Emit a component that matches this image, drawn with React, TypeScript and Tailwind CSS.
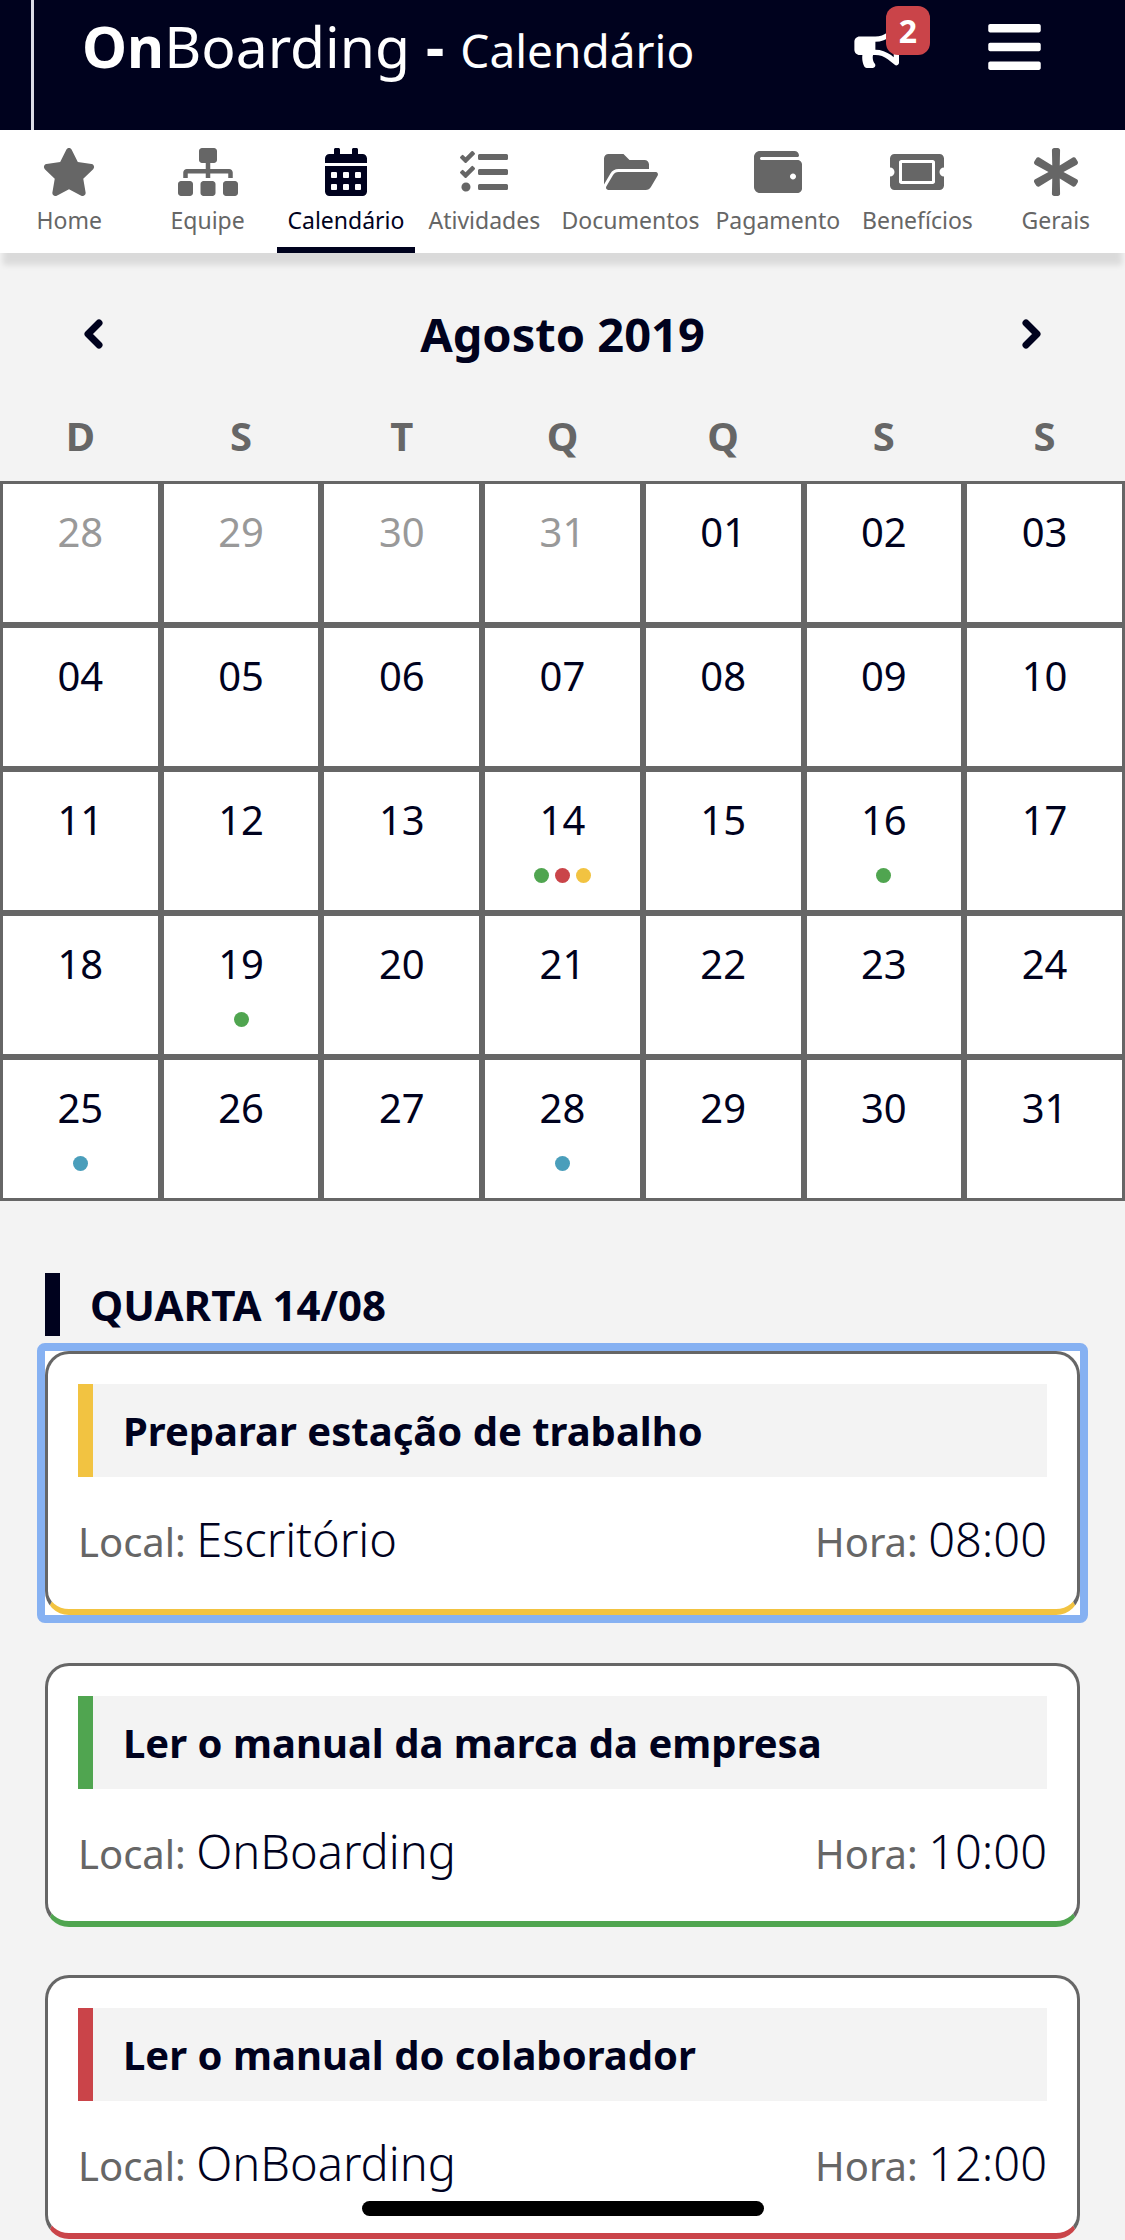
import type { IconType } from "react-icons";
import {
  FaAsterisk,
  FaBars,
  FaBullhorn,
  FaCalendarAlt,
  FaFolderOpen,
  FaSitemap,
  FaStar,
  FaTasks,
  FaTicketAlt,
  FaWallet,
} from "react-icons/fa";

type Tone = "green" | "red" | "yellow" | "blue";

const toneBackground: Record<Tone, string> = {
  green: "bg-[#50a550]",
  red: "bg-[#ca4449]",
  yellow: "bg-[#f2c341]",
  blue: "bg-[#4a9ebb]",
};

const toneBorderLeft: Record<Tone, string> = {
  green: "border-l-[#50a550]",
  red: "border-l-[#ca4449]",
  yellow: "border-l-[#f2c341]",
  blue: "border-l-[#4a9ebb]",
};

const toneBorderBottom: Record<Tone, string> = {
  green: "border-b-[#50a550]",
  red: "border-b-[#ca4449]",
  yellow: "border-b-[#f2c341]",
  blue: "border-b-[#4a9ebb]",
};

const tabs: { label: string; icon: IconType; active?: boolean }[] = [
  { label: "Home", icon: FaStar },
  { label: "Equipe", icon: FaSitemap },
  { label: "Calendário", icon: FaCalendarAlt, active: true },
  { label: "Atividades", icon: FaTasks },
  { label: "Documentos", icon: FaFolderOpen },
  { label: "Pagamento", icon: FaWallet },
  { label: "Benefícios", icon: FaTicketAlt },
  { label: "Gerais", icon: FaAsterisk },
];

const weekdays = ["D", "S", "T", "Q", "Q", "S", "S"];

const weeks = [
  ["28", "29", "30", "31", "01", "02", "03"],
  ["04", "05", "06", "07", "08", "09", "10"],
  ["11", "12", "13", "14", "15", "16", "17"],
  ["18", "19", "20", "21", "22", "23", "24"],
  ["25", "26", "27", "28", "29", "30", "31"],
];

const marks: Record<string, Tone[]> = {
  "2-3": ["green", "red", "yellow"],
  "2-5": ["green"],
  "3-1": ["green"],
  "4-0": ["blue"],
  "4-3": ["blue"],
};

type Task = { title: string; place: string; time: string; tone: Tone; focused?: boolean };

const tasks: Task[] = [
  { title: "Preparar estação de trabalho", place: "Escritório", time: "08:00", tone: "yellow", focused: true },
  { title: "Ler o manual da marca da empresa", place: "OnBoarding", time: "10:00", tone: "green" },
  { title: "Ler o manual do colaborador", place: "OnBoarding", time: "12:00", tone: "red" },
];

function Chevron({ d }: { d: string }) {
  return (
    <svg viewBox="0 0 20 30" className="h-[30px] w-5" fill="none" stroke="currentColor" aria-hidden="true">
      <path d={d} strokeWidth="7" strokeLinecap="round" strokeLinejoin="round" />
    </svg>
  );
}

function Header() {
  return (
    <header className="flex h-[130px] bg-[#00021e] pl-[31px] text-white">
      <div className="flex flex-1 items-start justify-between border-l-[3px] border-[#dcdce6] pl-12 pr-[84px]">
        <h1 className="flex items-baseline gap-4 whitespace-pre text-[57px] leading-[92px]">
          <span>
            <b className="font-bold">On</b>Boarding
          </span>
          <b className="font-bold">-</b>
          <span className="text-[46px]">Calendário</span>
        </h1>
        <div className="flex h-[94px] items-center gap-[86px]">
          <button type="button" aria-label="Avisos" className="relative">
            <FaBullhorn className="h-[42px] w-12" />
            <span className="absolute -top-5 left-8 flex h-[49px] w-11 items-center justify-center rounded-xl bg-[#ca4449] text-[32px] font-bold">
              2
            </span>
          </button>
          <button type="button" aria-label="Menu">
            <FaBars className="h-[60px] w-[53px]" />
          </button>
        </div>
      </div>
    </header>
  );
}

function Tabs() {
  return (
    <nav className="relative flex h-[123px] bg-white shadow-[0_15px_6px_-3px_rgba(0,0,0,0.1)]">
      {tabs.map(({ label, icon: Icon, active }) => (
        <a
          key={label}
          href="#"
          aria-current={active ? "page" : undefined}
          className={
            active
              ? "flex flex-1 flex-col items-center gap-2 border-b-[6px] border-[#00021e] px-2 pt-[18px] text-[#00021e]"
              : "flex flex-1 flex-col items-center gap-2 px-2 pt-[18px] text-[#666666]"
          }
        >
          <Icon className="h-12 w-[60px]" />
          <span className="text-[23px] leading-8">{label}</span>
        </a>
      ))}
    </nav>
  );
}

function Calendar() {
  return (
    <section>
      <div className="flex items-center justify-between px-[83px] pt-12">
        <button type="button" aria-label="Mês anterior">
          <Chevron d="M16 4 5 15l11 11" />
        </button>
        <h2 className="text-[47px] font-bold leading-[66px]">Agosto 2019</h2>
        <button type="button" aria-label="Próximo mês">
          <Chevron d="m4 4 11 11L4 26" />
        </button>
      </div>
      <table className="mt-6 w-full table-fixed border-separate border-spacing-0 text-center">
        <thead>
          <tr>
            {weekdays.map((day, i) => (
              <th key={i} scope="col" className="h-[90px] p-0 text-[40px] font-bold leading-[90px] text-[#666666]">
                {day}
              </th>
            ))}
          </tr>
        </thead>
        <tbody>
          {weeks.map((week, row) => (
            <tr key={row}>
              {week.map((day, col) => (
                <td
                  key={col}
                  className={
                    row === 0 && col < 4
                      ? "h-36 border-[3px] border-[#666666] bg-white p-0 align-top text-[#999999]"
                      : "h-36 border-[3px] border-[#666666] bg-white p-0 align-top"
                  }
                >
                  <span className="block pt-5 text-[40px] leading-[56px]">{day}</span>
                  <span className="flex justify-center gap-[6px] pt-5">
                    {(marks[`${row}-${col}`] ?? []).map((tone) => (
                      <i key={tone} className={`size-[15px] rounded-full ${toneBackground[tone]}`} />
                    ))}
                  </span>
                </td>
              ))}
            </tr>
          ))}
        </tbody>
      </table>
    </section>
  );
}

function TaskCard({ title, place, time, tone, focused }: Task) {
  return (
    <li className={focused ? "-m-2 rounded-lg border-8 border-[#86b1f2] bg-white" : ""}>
      <button
        type="button"
        className={`block w-full rounded-3xl border-[3px] border-b-[6px] border-[#666666] bg-white px-[30px] pt-[30px] text-left ${toneBorderBottom[tone]}`}
      >
        <span
          className={`block border-l-[15px] bg-[#f3f3f3] pl-[30px] text-[40px] font-bold leading-[93px] ${toneBorderLeft[tone]}`}
        >
          {title}
        </span>
        <span className="flex h-[132px] items-center justify-between pb-2">
          <span className="text-[40px] text-[#666666]">
            Local: <span className="text-[47px] font-light text-[#00021e]">{place}</span>
          </span>
          <span className="text-[40px] text-[#666666]">
            Hora: <span className="text-[47px] font-light text-[#00021e]">{time}</span>
          </span>
        </span>
      </button>
    </li>
  );
}

export default function App() {
  return (
    <div className="min-h-screen bg-[#f3f3f3] font-['Noto_Sans',sans-serif] text-[#00021e]">
      <Header />
      <Tabs />
      <Calendar />
      <section className="px-[45px] pt-[72px]">
        <h3 className="border-l-[15px] border-[#00021e] pl-[30px] text-[42px] font-bold leading-[63px]">
          QUARTA 14/08
        </h3>
        <ul className="flex flex-col gap-12 pt-[15px]">
          {tasks.map((task) => (
            <TaskCard key={task.title} {...task} />
          ))}
        </ul>
      </section>
      <div className="fixed inset-x-0 bottom-6 mx-auto h-[15px] w-[402px] rounded-full bg-black" />
    </div>
  );
}
